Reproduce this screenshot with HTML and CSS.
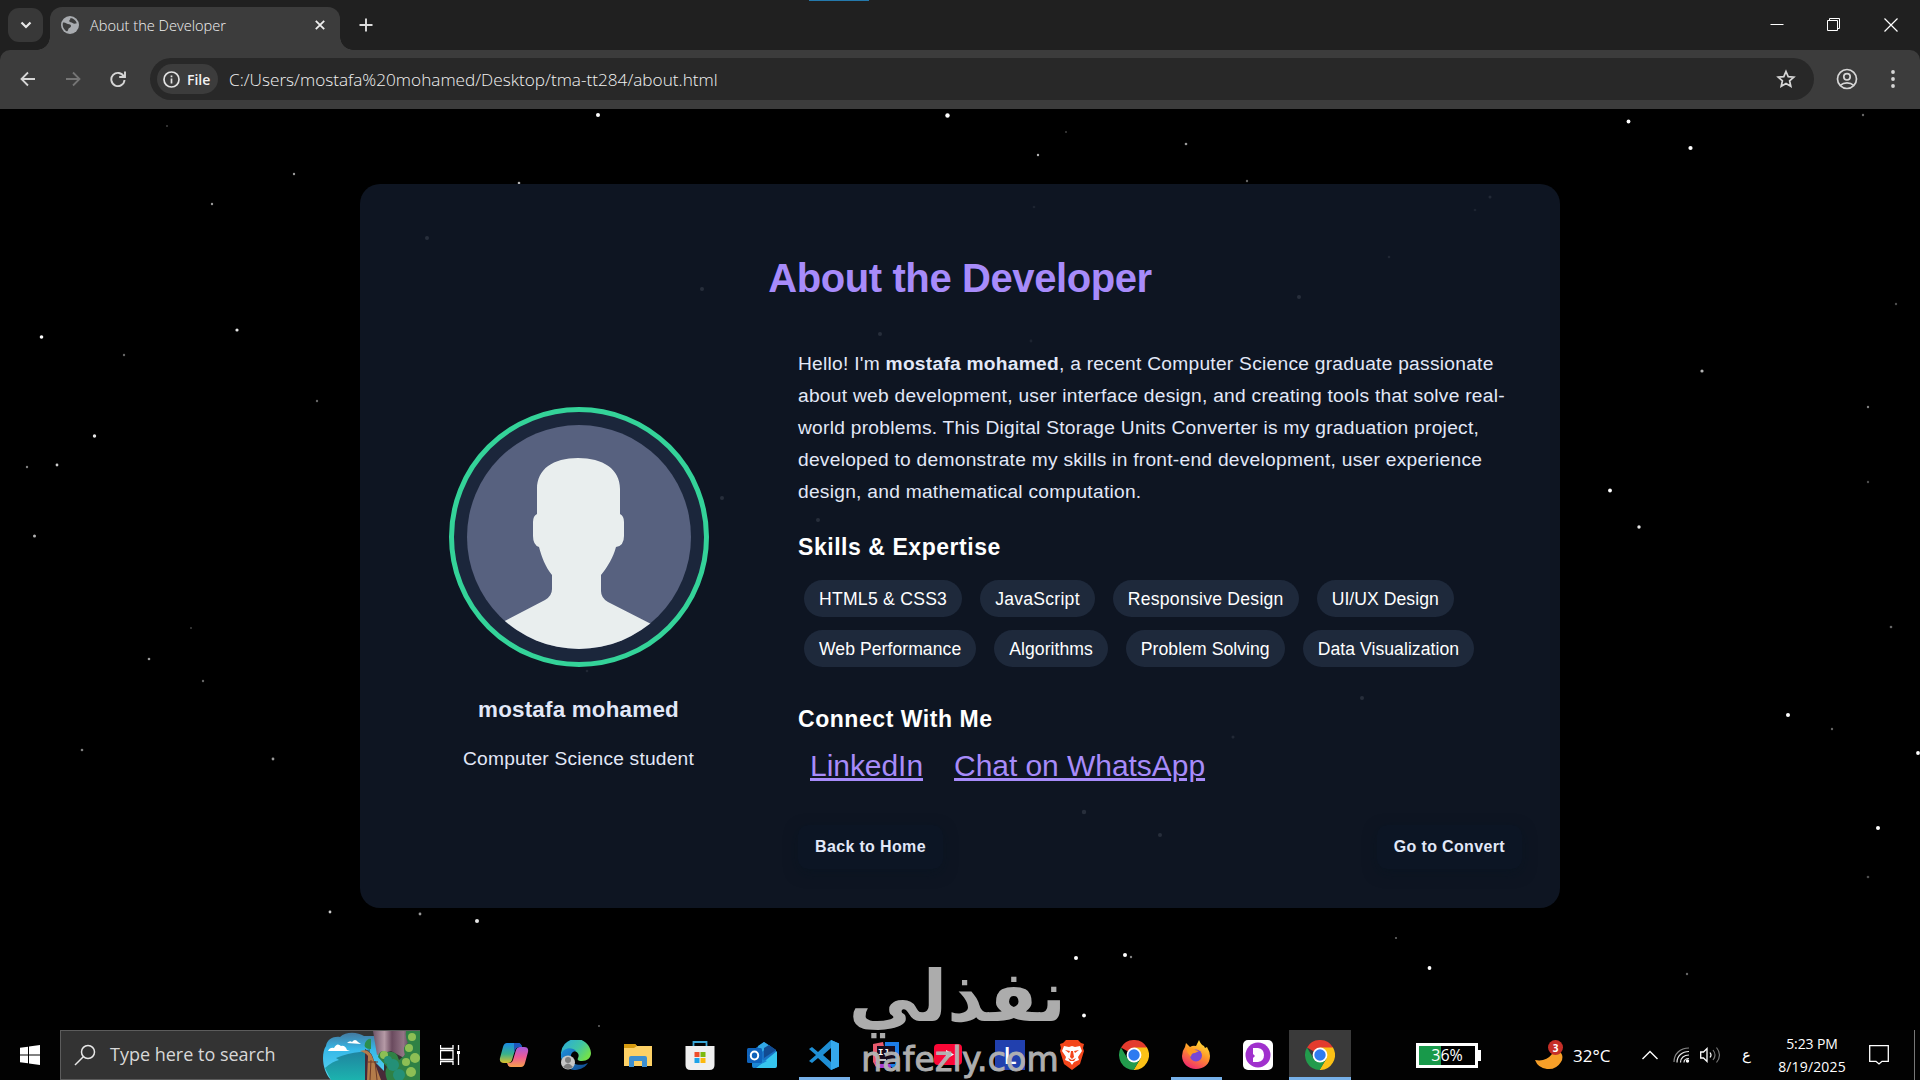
FILE: index.html
```html
<!DOCTYPE html>
<html lang="en">
<head>
  <meta charset="UTF-8">
  <meta name="viewport" content="width=device-width, initial-scale=1.0">
  <title>About the Developer</title>
  <link rel="stylesheet" href="styles.css">
</head>
<body>

  <svg class="defs" width="0" height="0">
    <symbol id="chrome" viewBox="0 0 30 30">
      <path d="M15 15 L2 7.5 A15 15 0 0 1 28 7.5 L28 8 H15z" fill="#e33b2e"/>
      <path d="M28 7.6 A15 15 0 0 1 14.5 30 L21.5 18.5 L15 7.6z" fill="#fbc116"/>
      <path d="M2 7.5 A15 15 0 0 0 14.7 30 L21.2 18.7 L15 15 L8.7 18.7z" fill="#229b4c"/>
      <circle cx="15" cy="15" r="7.4" fill="#fff"/>
      <circle cx="15" cy="15" r="5.7" fill="#2f7bf0"/>
    </symbol>
  </svg>

  <header class="browser">
    <div class="tab-strip">
      <div class="tab-search">
        <svg width="12" height="8" viewBox="0 0 12 8"><path d="M1.5 1.5 6 6l4.500-4.500" fill="none" stroke="#e8e8e8" stroke-width="2.200"/></svg>
      </div>
      <div class="tab">
        <svg width="18" height="18" viewBox="0 0 18 18">
          <circle cx="9" cy="9" r="9" fill="#a9acb0"/>
          <path d="M2 6.500c2.500-.5 3.500 1 5 1.500 1.500.6 3 .2 3 2s-2.300 1.500-2.800 3.500c-.3 1.200-.7 2-1.700 1.700C2.600 13.500 1 10 2 6.500zM9.500 2c.2 1.800-1.500 1.800-1.200 3.200.3 1.300 2.300.6 3.300 1.700.9 1 2.500 1 4.200.3C15 4.500 12.500 2.200 9.500 2z" fill="#3c3c3c"/>
        </svg>
        <span class="tab-title">About the Developer</span>
        <svg width="10" height="10" viewBox="0 0 10 10"><path d="M.8.8l8.400 8.400M9.200.8.8 9.200" stroke="#eee" stroke-width="1.800"/></svg>
      </div>
      <svg class="new-tab" width="14" height="14" viewBox="0 0 14 14"><path d="M7 .5v13M.5 7h13" stroke="#ddd" stroke-width="1.900"/></svg>
      <div class="window-buttons">
        <svg width="14" height="14" viewBox="0 0 14 14"><path d="M.5 6.500h13" stroke="#fff"/></svg>
        <svg width="14" height="14" viewBox="0 0 14 14"><path d="M.5 2.500h10v10H.5zM2.500 2.500v-2h10v10h-2" fill="none" stroke="#fff"/></svg>
        <svg width="14" height="14" viewBox="0 0 14 14"><path d="M.5.5l13 13M13.500.5l-13 13" stroke="#fff" stroke-width="1.200"/></svg>
      </div>
      <div class="capture-line"></div>
    </div>

    <div class="toolbar">
      <svg class="nav-icon" width="16" height="16" viewBox="0 0 16 16"><path d="M15 8H2M8 1.500 1.500 8 8 14.500" fill="none" stroke="#d6d6d6" stroke-width="1.800"/></svg>
      <svg class="nav-icon" width="16" height="16" viewBox="0 0 16 16"><path d="M1 8h13M8 1.500 14.500 8 8 14.500" fill="none" stroke="#757575" stroke-width="1.800"/></svg>
      <svg class="nav-icon" width="16" height="16" viewBox="0 0 16 16"><path d="M13.800 5.500A6.600 6.600 0 1 0 14.500 9M15 .5v5.500H9.200" fill="none" stroke="#d6d6d6" stroke-width="1.900"/></svg>
      <div class="address">
        <div class="file-chip">
          <svg width="17" height="17" viewBox="0 0 17 17"><circle cx="8.500" cy="8.500" r="7.500" fill="none" stroke="#e3e3e3" stroke-width="1.700"/><path d="M8.500 7.500V12.500M8.500 4.500v1.700" stroke="#e3e3e3" stroke-width="1.700"/></svg>
          <span>File</span>
        </div>
        <span class="url">C:/Users/mostafa%20mohamed/Desktop/tma-tt284/about.html</span>
        <svg class="star" width="20" height="20" viewBox="0 0 20 20"><path d="M10 2.500l2.200 5.100 5.600.5-4.200 3.700 1.200 5.500L10 14.400l-4.800 2.900 1.200-5.500L2.200 8.100l5.600-.5z" fill="none" stroke="#d6d6d6" stroke-width="1.700"/></svg>
      </div>
      <svg class="profile" width="22" height="22" viewBox="0 0 22 22"><g fill="none" stroke="#d6d6d6" stroke-width="1.700"><circle cx="11" cy="11" r="9.500"/><circle cx="11" cy="8.800" r="3.200"/><path d="M4.300 17.300c3.600-3.200 9.800-3.200 13.400 0"/></g></svg>
      <svg class="menu" width="4" height="18" viewBox="0 0 4 18"><g fill="#d6d6d6"><circle cx="2" cy="2" r="1.900"/><circle cx="2" cy="9" r="1.900"/><circle cx="2" cy="16" r="1.900"/></g></svg>
    </div>
  </header>

  <main class="page">
    <svg class="stars" width="1920" height="971" viewBox="0 109 1920 971" id="stars"></svg>

    <section class="card">
      <h1>About the Developer</h1>
      <div class="content">
        <div class="profile-side">
          <div class="avatar">
            <svg width="224" height="224" viewBox="0 0 224 224">
              <clipPath id="round"><circle cx="112" cy="112" r="112"/></clipPath>
              <g clip-path="url(#round)">
                <rect width="224" height="224" fill="#57617f"/>
                <path d="M70 89V64c0-20 16-31 41-31s42 11 42 31v25q4 2 4 8v14q0 10-8 11c-3 11-8 19-15 28v16q0 7 7 11l51 26V224H30v-24l48-25q7-4 7-11V150c-7-9-10-17-13-28q-6-2-6-11V97q0-6 4-8z" fill="#e9eeee"/>
              </g>
            </svg>
          </div>
          <h2 class="name">mostafa mohamed</h2>
          <p class="role">Computer Science student</p>
        </div>

        <div class="bio">
          <p class="intro">Hello! I'm <strong>mostafa mohamed</strong>, a recent Computer Science graduate passionate about web development, user interface design, and creating tools that solve real-world problems. This Digital Storage Units Converter is my graduation project, developed to demonstrate my skills in front-end development, user experience design, and mathematical computation.</p>
          <h3 class="skills-title">Skills &amp; Expertise</h3>
          <div class="skills">
            <span>HTML5 &amp; CSS3</span>
            <span>JavaScript</span>
            <span>Responsive Design</span>
            <span>UI/UX Design</span>
            <span>Web Performance</span>
            <span>Algorithms</span>
            <span>Problem Solving</span>
            <span>Data Visualization</span>
          </div>
          <h3 class="connect-title">Connect With Me</h3>
          <div class="links">
            <a href="#">LinkedIn</a>
            <a href="#">Chat on WhatsApp</a>
          </div>
          <div class="buttons">
            <a class="btn" href="#">Back to Home</a>
            <a class="btn" href="#">Go to Convert</a>
          </div>
        </div>
      </div>
    </section>
  </main>

  <footer class="taskbar">
    <div class="start">
      <svg width="20" height="20" viewBox="0 0 20 20"><path d="M0 2.800 8 1.700V9.500H0zM9 1.500 20 0V9.500H9zM0 10.500h8v7.800L0 17.200zM9 10.500h11V20L9 18.500z" fill="#fff"/></svg>
    </div>
    <div class="search">
      <svg width="22" height="22" viewBox="0 0 22 22"><circle cx="14" cy="8" r="6.500" fill="none" stroke="#e8e8e8" stroke-width="1.500"/><path d="M9.300 12.700 1 21" stroke="#e8e8e8" stroke-width="1.500"/></svg>
      <span>Type here to search</span>
      <svg class="scene" width="98" height="49" viewBox="0 0 98 49">
        <defs>
          <linearGradient id="sky" x1="0" y1="0" x2="0" y2="1"><stop offset="0" stop-color="#43799f"/><stop offset=".35" stop-color="#36b8e8"/><stop offset="1" stop-color="#5cd6f3"/></linearGradient>
          <linearGradient id="sea" x1="0" y1="0" x2="0" y2="1"><stop offset="0" stop-color="#1f7f9e"/><stop offset="1" stop-color="#1cb3ae"/></linearGradient>
          <linearGradient id="rock" x1="0" x2="1"><stop offset="0" stop-color="#6d5468"/><stop offset=".3" stop-color="#b59aa6"/><stop offset=".5" stop-color="#6a4a5e"/><stop offset=".8" stop-color="#937586"/><stop offset="1" stop-color="#4b3850"/></linearGradient>
        </defs>
        <path d="M9 49C0 40-1 22 4 15c1-7 8-10 14-9 6-6 18-5 24-1h20v44z" fill="url(#sky)"/>
        <path d="M6 20q2-4 6-3 3-6 7-2 4-1 6 4l3 1zM25 12q3-3 5-1 3-4 6 0l3 2z" fill="#fff"/>
        <path d="M3 37q8-7 14-8l-3-2q12-5 24-6l10-3v31H9z" fill="url(#sea)"/>
        <path d="M43 49V18q7 3 9 12l19 19z" fill="#482a38"/>
        <path d="M51 0h38l-7 27-13-7-14 4z" fill="url(#rock)"/>
        <path d="M84 0h14v49H65q-3-8 0-13l-9-10q1-8 9-5 10-2 12 8l6-5q-3-9 3-12-3-6-2-12z" fill="#2f8145"/>
        <g fill="#8dbf55"><circle cx="62" cy="24" r="4"/><circle cx="90" cy="6" r="4"/><circle cx="87" cy="17" r="4"/><circle cx="93" cy="27" r="5"/><circle cx="84" cy="31" r="4"/><circle cx="89" cy="41" r="5"/></g>
        <g fill="#249077"><circle cx="71" cy="34" r="6"/><circle cx="77" cy="44" r="6"/><circle cx="66" cy="29" r="4"/></g>
        <path d="M43 12q3-5 6-4v10q-8 0-6-6z" fill="#2b8e4d"/>
        <path d="M38 20q8-3 12 5l9 24H45l1-24q-2-3-8-5z" fill="#b47c4a"/>
        <path d="M49 29l-1 20M53 30l2 19M46 31h10" stroke="#6f3b26"/>
      </svg>
    </div>
    <div class="task-item task-view">
      <svg width="21" height="20" viewBox="0 0 21 20"><path d="M.5 0v3.500h12.500V0M.5 5.500h12.500v9H.5zM.5 20v-3.500h12.500V20M18.500 0v5M18.500 9v11" fill="none" stroke="#fff" stroke-width="1.300"/><path d="M17 6h3v3h-3z" fill="#fff"/></svg>
    </div>

    <div class="task-item">
      <!-- Copilot -->
      <svg width="30" height="30" viewBox="0 0 30 30">
        <defs>
          <linearGradient id="cp1" x1="0" y1="0" x2="0" y2="1"><stop offset="0" stop-color="#1a8be4"/><stop offset=".55" stop-color="#38b28b"/><stop offset="1" stop-color="#dcc02b"/></linearGradient>
          <linearGradient id="cp2" x1="0" y1="0" x2="0" y2="1"><stop offset="0" stop-color="#a75bdc"/><stop offset=".5" stop-color="#ee5a96"/><stop offset="1" stop-color="#f6a04c"/></linearGradient>
        </defs>
        <path d="M8 3h11q3 0 4 4h-3q-3 0-4 3l-3 10q-1 3-4 3H5q-5 0-4-5L4 7q1-4 4-4z" fill="url(#cp1)"/>
        <path d="M22 27H12q-3 0-4-4h2q3 0 4-3l3-10q1-3 4-3h4q5 0 4 5l-3 11q-1 4-4 4z" fill="url(#cp2)"/>
        <path d="M15 3h4q3 0 4 4h-3q-3 0-4 3l-1 3z" fill="#1d55bb"/>
      </svg>
    </div>
    <div class="task-item">
      <!-- Edge -->
      <svg width="30" height="30" viewBox="0 0 30 30">
        <defs>
          <linearGradient id="ed1" x1="0" y1="0" x2="1" y2=".6"><stop offset="0" stop-color="#2aa7df"/><stop offset=".6" stop-color="#3fc5a5"/><stop offset="1" stop-color="#72e04c"/></linearGradient>
          <linearGradient id="ed2" x1="0" y1="0" x2="1" y2="1"><stop offset="0" stop-color="#1e8fdb"/><stop offset="1" stop-color="#11488d"/></linearGradient>
        </defs>
        <path d="M0 15A15 15 0 0 1 30 13c0 5-4 8-9 8-4 0-5-1-4-3 2-4-1-7-5-7-5 0-9 3-12 8z" fill="url(#ed1)"/>
        <path d="M0 15c1-7 11-9 15-4-4 0-6 4-5 8 1 5 8 8 17 4-4 6-10 7-14 7C6 29 0 23 0 15z" fill="url(#ed2)"/>
        <circle cx="7" cy="22.500" r="7" fill="#c7c7c7"/><circle cx="7" cy="20" r="3" fill="#7e7e7e"/><path d="M2 27q5-7 10 0-5 4-10 0z" fill="#7e7e7e"/>
      </svg>
    </div>
    <div class="task-item">
      <!-- File Explorer -->
      <svg width="28" height="24" viewBox="0 0 28 24"><path d="M0 1h11l2 2h15v20H0z" fill="#fdd166"/><path d="M0 1h11l2 2-3 2H0z" fill="#d79b0f"/><path d="M5 24V15q0-2 2-2h14q2 0 2 2v9h-5v-6h-8v6z" fill="#3d8fd0"/></svg>
    </div>
    <div class="task-item">
      <!-- Store -->
      <svg width="30" height="30" viewBox="0 0 30 30"><path d="M8.500 7V2h13v5" fill="none" stroke="#3aa6d6" stroke-width="1.800"/><path d="M.5 6h29v19q0 5-5 5h-19q-5 0-5-5z" fill="#efefef"/><path d="M9.500 12h5v5h-5z" fill="#ee4f2c"/><path d="M15.500 12h5v5h-5z" fill="#7cb90d"/><path d="M9.500 18h5v5h-5z" fill="#1ca3e8"/><path d="M15.500 18h5v5h-5z" fill="#fcb80c"/></svg>
    </div>
    <div class="task-item">
      <!-- Outlook -->
      <svg width="30" height="28" viewBox="0 0 30 28"><path d="M6 9 17 1l12 8v16q0 2-2 2H8q-2 0-2-2z" fill="#1871c4"/><path d="M11 5l6-4 6 4-11 8z" fill="#32a8e6"/><path d="M17 7l5-3 7 5-12 8z" fill="#124b91"/><path d="M30 10v15q0 2-2 2H9z" fill="#36c5ee"/><path d="M5 15l15 5-13 7q-2 0-2-2z" fill="#1a86d4"/><rect y="7" width="15" height="15" rx="1.500" fill="#0f62ba"/><ellipse cx="7.500" cy="14.500" rx="3.700" ry="4" fill="none" stroke="#fff" stroke-width="2"/></svg>
    </div>
    <div class="task-item">
      <!-- VS Code -->
      <svg width="30" height="30" viewBox="0 0 30 30"><path d="M22 0l8 3.500v23L22 30 9 18l-6 5-3-2 7-6-7-6 3-2 6 5zM22 8l-8 7 8 7z" fill="#1f8fd5"/><path d="M22 0l8 3.500v23L22 30z" fill="#35a9ec"/></svg>
      <i class="line"></i>
    </div>
    <div class="task-item">
      <!-- IntelliJ -->
      <svg width="26" height="26" viewBox="0 0 26 26"><path d="M0 2l10-2 3 13L3 25 0 20z" fill="#e95a6d"/><path d="M12 0h14v24l-6 2-9-6z" fill="#1c7de8"/><path d="M2 20l14-4 2 10H4z" fill="#a63bd2"/><path d="M4 4h18v18H4z" fill="#150a1c"/><text x="5" y="13" class="ij">IJ</text><path d="M6 18h7" stroke="#fff" stroke-width="1.500"/></svg>
    </div>
    <div class="task-item">
      <svg width="28" height="22" viewBox="0 0 28 22"><rect width="28" height="21" rx="4" fill="#fb0836"/><path d="M12 6l8 4.500-8 4.500z" fill="#fff"/></svg>
    </div>
    <div class="task-item"><span class="l-app">L</span></div>
    <div class="task-item">
      <!-- Brave -->
      <svg width="26" height="30" viewBox="0 0 26 30"><path d="M7 0h12l3 3 3 1-1 4 1 3-4 13-8 6-8-6L1 11l1-3-1-4 3-1z" fill="#f4461b"/><path d="M5 6l5 1 3-1 3 1 5-1 2 5-4 6 1 3-5 2-2 3-2-3-5-2 1-3-4-6z" fill="#fff"/><path d="M6 10l5 1-1 2zM20 10l-5 1 1 2zM12 11h2l1 6-2 2-2-2zM9 18l4 2 4-2-2 3h-4z" fill="#f4461b"/></svg>
    </div>
    <div class="task-item"><svg width="30" height="30"><use href="#chrome"/></svg></div>
    <div class="task-item">
      <!-- Firefox -->
      <svg width="30" height="30" viewBox="0 0 30 30">
        <defs><linearGradient id="fx" x1=".8" y1="0" x2=".3" y2="1"><stop offset="0" stop-color="#ffe93d"/><stop offset=".45" stop-color="#ff9a28"/><stop offset="1" stop-color="#f0266f"/></linearGradient></defs>
        <path d="M4 7l1-4 4 4q3-2 6-1l3-6q2 5 5 6l1 2 2-1q3 5 3 9c0 8-6 13-14 13S1 23 1 16q0-5 3-9z" fill="url(#fx)"/>
        <circle cx="15" cy="15.500" r="6" fill="#7747d6"/>
        <path d="M5 8q6-1 9 2l4 1-4 2q-4 0-4 4-4-4-5-9z" fill="#ff9b22"/>
      </svg>
      <i class="line"></i>
    </div>
    <div class="task-item">
      <svg width="30" height="30" viewBox="0 0 30 30"><rect width="30" height="30" rx="5" fill="#fff"/><circle cx="15" cy="15" r="12.500" fill="#a030cd"/><path d="M10 8h5q6 1 6 7t-6 7h-5v-4l2-2-2-2z" fill="#fff"/></svg>
    </div>
    <div class="task-item active"><svg width="30" height="30"><use href="#chrome"/></svg><i class="line"></i></div>

    <div class="tray">
      <div class="battery"><span>36%</span></div>
      <div class="weather">
        <svg width="30" height="30" viewBox="0 0 30 30"><path d="M1 20q11 2 17-6l9-1q3 4 0 9-5 8-14 7-9-1-12-9z" fill="#f79f28"/><circle cx="21.500" cy="7.500" r="7.500" fill="#c62f28"/><text x="18.700" y="11.500" class="badge">3</text></svg>
        <span>32°C</span>
      </div>
      <svg class="chevron" width="16" height="10" viewBox="0 0 16 10"><path d="M.5 9 8 1.500 15.500 9" fill="none" stroke="#fff" stroke-width="1.400"/></svg>
      <svg class="wifi" width="17" height="16" viewBox="0 0 17 16"><g fill="none" stroke="#e8e8e8" stroke-width="1.200"><path d="M1 15C1 7 7 1 16 1" stroke="#888"/><path d="M4 15.500C4 9 9 4.500 16 4.500M7.500 15.500c0-4.500 3.500-7.500 8.500-7.500M11 15.500c0-2.500 2-4 5-4"/></g><circle cx="14.500" cy="14" r="1.700" fill="#fff"/></svg>
      <svg class="sound" width="21" height="18" viewBox="0 0 21 18"><path d="M.7 6h2.800L7 2.500v13L3.500 12H.7z" fill="none" stroke="#fff" stroke-width="1.300"/><path d="M10 6.500q2 2.500 0 5" fill="none" stroke="#fff" stroke-width="1.200"/><path d="M13 4q4 5 0 10M16.500 1.500q6 7.500 0 15" fill="none" stroke="#777" stroke-width="1.200"/></svg>
      <span class="lang">ع</span>
      <div class="clock"><span>5:23 PM</span><span class="date">8/19/2025</span></div>
      <svg class="notice" width="20" height="20" viewBox="0 0 20 20"><path d="M.7.7h18.600v15.600h-6.300L10 19l-3-2.700H.7z" fill="none" stroke="#fff" stroke-width="1.300"/></svg>
      <div class="show-desktop"></div>
    </div>
  </footer>

  <div class="watermark">
    <div class="mark-ar" lang="ar" dir="rtl">نفذلي</div>
    <div class="mark-en">nafezly.com</div>
  </div>

  <script>
    // x, y, radius, opacity
    const stars = [
      [598,115,2,1],[947.5,115.5,2.2,1],[1628.5,121.5,1.9,1],[1690.5,148,2.1,1],[1863,115,1.2,.4],[1186,144,1.3,.6],
      [1038,155,1.2,.7],[1066,132,1,.25],[167,126,1,.25],[294,174,1.2,.6],[212,204,1.2,.6],[237,330,1.6,.9],
      [41.5,337,1.8,1],[124,355,1.2,.4],[94.500,436,1.7,.9],[57,465,1.4,.8],[27,467,1.2,.5],[34.500,536,1.5,.7],
      [317,401,1.2,.4],[149,659,1.3,.6],[191,628,1,.25],[203,681,1.2,.4],[82,750,1.3,.5],[273,759,1.4,.6],
      [330,912,1.4,.8],[420,914,1.4,.6],[477,921,2,.9],[1702,371,1.6,.7],[1610,490.5,1.9,1],[1639,527,1.7,.9],
      [1868,407,1.2,.5],[1868,482,1.2,.3],[1891,627,1.3,.4],[1788,715,2,1],[1832,729,1.2,.4],[1878,828,2,1],
      [1918,753,1.9,1],[1868,877,1.3,.3],[1896,304,1.2,.3],[1429.5,968,1.9,1],[1396,938,1.1,.4],[1687,974,1.2,.4],
      [1076,958,2,1],[1125,955,2,1],[1131,957,1.2,.5],[1084,1015.5,1.9,1],[519,183,1.3,.7],[1247,181,1.2,.4],
      [427,238,2,1],[702,289,2,1],[880,334,2,1],[1031,341,1.4,.6],[722,498,2,1],[818,520,2,1],
      [1362,698,2,1],[1233,737,1.5,.8],[1084,812,2.2,1],[1160,835,2,1],[1299,297,2,1],[1490,197,1.5,.8],
      [1389,257,1.3,.7],[1034,207,1.3,.6],[587,671,1.3,.7],[599,1026,1,.4],[1475,210,1.3,.6]
    ];
    document.getElementById('stars').innerHTML = stars.map(s =>
      `<circle cx="${s[0]}" cy="${s[1]}" r="${s[2]}" fill="#fff" opacity="${s[3]}"/>`).join('');
  </script>
</body>
</html>
```
FILE: styles.css
```css
* {
  box-sizing: border-box;
}

body {
  margin: 0;
  height: 1080px;
  display: flex;
  flex-direction: column;
  overflow: hidden;
  background: #000;
  color: #e2e8f8;
  font-family: "Liberation Sans", Arial, sans-serif;
  position: relative;
}

svg {
  display: block;
  flex: none;
}

.defs {
  position: absolute;
}

h1, h2, h3, p {
  margin: 0;
}

/* browser window */
.browser {
  height: 109px;
  background: #202020;
  font-family: "Open Sans", sans-serif;
  color: #f2f2f2;
}

.tab-strip {
  height: 50px;
  display: flex;
  padding: 7px 12px 0 8px;
  position: relative;
}

.tab-search {
  width: 35px;
  height: 34px;
  margin: 1px 7px 0 0;
  border-radius: 11px;
  background: #383838;
  display: flex;
  align-items: center;
  justify-content: center;
}

.tab {
  width: 290px;
  height: 43px;
  padding: 0 15px 7px 11px;
  display: flex;
  align-items: center;
  background: #3c3c3c;
  border-radius: 12px 12px 0 0;
  position: relative;
}

.tab::before,
.tab::after {
  content: "";
  position: absolute;
  bottom: 0;
  width: 13px;
  height: 13px;
}

.tab::before {
  left: -13px;
  background: radial-gradient(circle at 0 0, transparent 12.500px, #3c3c3c 13px);
}

.tab::after {
  right: -13px;
  background: radial-gradient(circle at 100% 0, transparent 12.500px, #3c3c3c 13px);
}

.tab-title {
  flex: 1;
  margin: -1px 0 0 11px;
  font-size: 14.600px;
  font-weight: 300;
}

.new-tab {
  margin: 11px 0 0 19px;
}

.window-buttons {
  margin-left: auto;
  display: flex;
  gap: 43px;
  padding: 11px 10px 0 0;
}

.capture-line {
  position: absolute;
  left: 809px;
  top: 0;
  width: 60px;
  height: 1px;
  background: #2479ac;
}

.toolbar {
  height: 59px;
  padding: 0 25px 2px 20px;
  display: flex;
  align-items: center;
  background: #3c3c3c;
  border-radius: 10px 10px 0 0;
}

.nav-icon {
  margin-right: 29px;
}

.address {
  flex: 1;
  height: 42px;
  margin: 1px 22px 0 -5px;
  padding: 0 18px 0 7px;
  display: flex;
  align-items: center;
  border-radius: 21px;
  background: #282828;
}

.file-chip {
  width: 61px;
  height: 30px;
  padding-left: 6px;
  display: flex;
  align-items: center;
  gap: 7px;
  border-radius: 15px;
  background: #3c3c3c;
  font-size: 14px;
  font-weight: 600;
}

.url {
  flex: 1;
  margin-left: 11px;
  font-size: 17.200px;
  font-weight: 300;
}

.profile {
  margin-right: 33px;
}

/* starry page */
.page {
  height: 921px;
  padding-top: 75px;
  position: relative;
}

.stars {
  position: absolute;
  left: 0;
  top: 0;
}

.card {
  position: relative;
  width: 1200px;
  height: 724px;
  margin: 0 auto;
  padding: 70px 38px 0;
  border-radius: 20px;
  background: rgba(16, 23, 38, 0.9);
}

.card h1 {
  height: 48px;
  line-height: 48px;
  text-align: center;
  font-size: 40px;
  letter-spacing: -0.400px;
  color: #a78bfa;
}

.content {
  display: grid;
  grid-template-columns: 361px 724px;
  column-gap: 39px;
  margin-top: 46px;
}

.profile-side {
  display: flex;
  flex-direction: column;
  align-items: center;
  padding-top: 59px;
}

.avatar {
  width: 260px;
  height: 260px;
  display: flex;
  align-items: center;
  justify-content: center;
  border: 5px solid #34d399;
  border-radius: 50%;
  background: #1b263b;
}

.name {
  margin-top: 28px;
  line-height: 30px;
  font-size: 22.400px;
  letter-spacing: 0.200px;
}

.role {
  margin-top: 18px;
  line-height: 32px;
  font-size: 19.200px;
  letter-spacing: 0.200px;
}

.intro {
  line-height: 32px;
  font-size: 19.200px;
  letter-spacing: 0.260px;
}

.skills-title,
.connect-title {
  line-height: 30px;
  font-size: 23px;
  letter-spacing: 0.550px;
  color: #fff;
}

.skills-title {
  margin-top: 24px;
}

.skills {
  display: flex;
  flex-wrap: wrap;
  gap: 13px 18px;
  margin-top: 18px;
  padding-left: 6px;
}

.skills span {
  height: 37px;
  line-height: 38px;
  padding: 0 15px;
  border-radius: 19px;
  background: #1e293b;
  color: #fff;
  font-size: 17.600px;
  letter-spacing: 0.250px;
}

.skills span:nth-child(n+4) {
  letter-spacing: 0.050px;
}

.connect-title {
  margin-top: 37px;
}

.links {
  display: flex;
  gap: 31px;
  margin-top: 14px;
  padding-left: 12px;
  line-height: 36px;
  font-size: 30px;
  letter-spacing: -0.050px;
}

.links a {
  color: #a78bfa;
}

.buttons {
  display: flex;
  justify-content: space-between;
  margin-top: 41px;
}

.btn {
  height: 44px;
  line-height: 44px;
  padding: 0 17px;
  border-radius: 10px;
  background: #0c1524;
  box-shadow: 0 4px 14px rgba(5, 20, 32, 0.5);
  color: #e2e8f8;
  font-size: 16px;
  font-weight: bold;
  letter-spacing: 0.350px;
  text-decoration: none;
}

/* taskbar */
.taskbar {
  height: 50px;
  display: flex;
  background: #020202;
  color: #fff;
  font-family: "Open Sans", sans-serif;
  position: relative;
}

.start {
  width: 60px;
  display: flex;
  align-items: center;
  justify-content: center;
}

.search {
  width: 360px;
  padding-left: 13px;
  display: flex;
  align-items: center;
  border: 1px solid #5c5c5c;
  border-right: 0;
  background: #333;
  color: #d8d8d8;
  font-size: 18px;
}

.search span {
  flex: 1;
  margin: -2px 0 0 14px;
}

.task-item {
  width: 62px;
  display: flex;
  align-items: center;
  justify-content: center;
  position: relative;
}

.task-view {
  width: 62px;
  margin-right: 1px;
  padding-right: 2px;
}

.line {
  position: absolute;
  left: 6px;
  right: 5px;
  bottom: 0;
  height: 3px;
  background: #76b0e8;
}

.active {
  background: #3a3a3a;
}

.active .line {
  left: 0;
  right: 0;
}

.ij {
  font: bold 9px "Liberation Mono", monospace;
  fill: #fff;
}

.l-app {
  width: 30px;
  height: 30px;
  background: #2140ae;
  text-align: center;
  font-size: 24px;
  line-height: 30px;
  font-weight: 600;
}

.tray {
  flex: 1;
  display: flex;
  align-items: center;
  padding-left: 65px;
}

.battery {
  width: 62px;
  height: 25px;
  border: 3px solid #fff;
  background: linear-gradient(90deg, #18994a 22px, #000 22px);
  text-align: center;
  font-size: 16px;
  line-height: 18px;
  position: relative;
}

.battery::after {
  content: "";
  position: absolute;
  right: -6px;
  top: 4px;
  width: 3px;
  height: 11px;
  background: #fff;
}

.weather {
  display: flex;
  align-items: center;
  gap: 9px;
  margin-left: 56px;
  width: 108px;
  font-size: 17px;
  white-space: nowrap;
}

.badge {
  font-size: 10px;
  font-weight: bold;
  fill: #fff;
}

.wifi {
  margin-left: 15px;
}

.sound {
  margin-left: 10px;
}

.lang {
  width: 12px;
  margin-left: 21px;
  font-family: "DejaVu Sans", sans-serif;
  font-size: 15px;
}

.clock {
  width: 80px;
  margin-left: 18px;
  display: flex;
  flex-direction: column;
  align-items: center;
  line-height: 23px;
  font-size: 14px;
  letter-spacing: -0.100px;
}

.date {
  letter-spacing: 0.150px;
}

.notice {
  margin-left: 17px;
}

.show-desktop {
  width: 1px;
  height: 50px;
  margin-left: 25px;
  background: #777;
}

/* translucent site mark over the desktop */
.watermark {
  position: absolute;
  left: 854px;
  top: 960px;
  width: 212px;
  height: 120px;
  color: #b4b4b4;
  opacity: 0.96;
  text-align: center;
  white-space: nowrap;
}

.mark-ar {
  font: bold 71px/74px "DejaVu Sans", sans-serif;
}

.mark-en {
  padding: 3px 0 0 0;
  font: 33px/46px "DejaVu Sans", sans-serif;
  letter-spacing: 0.200px;
  -webkit-text-stroke: 1px #b4b4b4;
}
```
